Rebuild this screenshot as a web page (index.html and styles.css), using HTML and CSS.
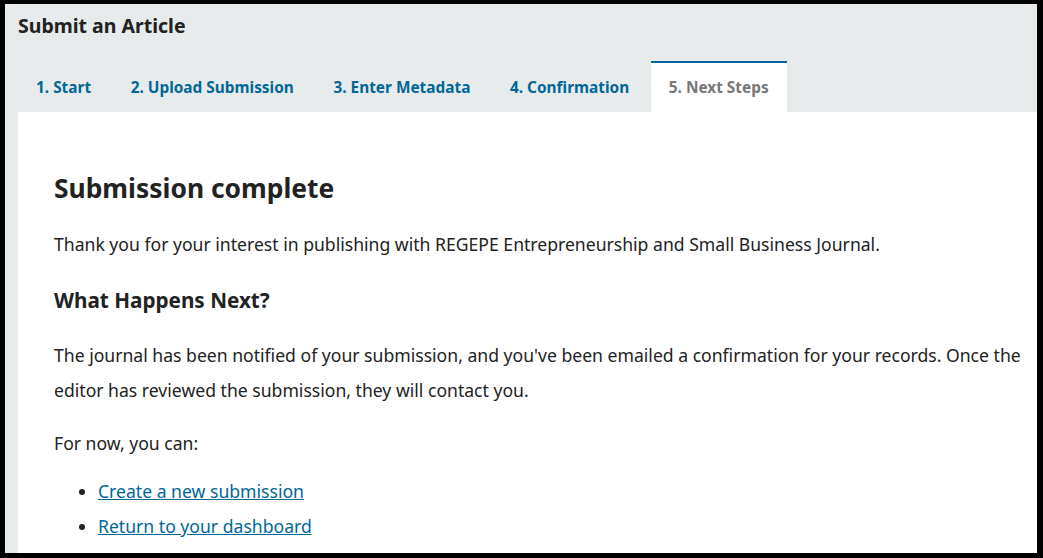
FILE: index.html
```html
<!DOCTYPE html>
<html lang="en">
<head>
  <meta charset="UTF-8">
  <title>Submit an Article</title>
  <link rel="stylesheet" href="styles.css">
</head>
<body>
  <div id="page">
    <h1 class="page-title">Submit an Article</h1>

    <ul class="tabs">
      <li><a href="#">1. Start</a></li>
      <li><a href="#">2. Upload Submission</a></li>
      <li><a href="#">3. Enter Metadata</a></li>
      <li><a href="#">4. Confirmation</a></li>
      <li class="active"><a href="#">5. Next Steps</a></li>
    </ul>

    <div class="panel">
      <h2>Submission complete</h2>
      <p>Thank you for your interest in publishing with REGEPE Entrepreneurship and Small Business Journal.</p>
      <h3>What Happens Next?</h3>
      <p>The journal has been notified of your submission, and you've been emailed a confirmation for your records. Once the editor has reviewed the submission, they will contact you.</p>
      <p class="tight">For now, you can:</p>
      <ul class="next-links">
        <li><a href="#">Create a new submission</a></li>
        <li><a href="#">Return to your dashboard</a></li>
      </ul>
    </div>
  </div>
</body>
</html>
```

FILE: styles.css
```css
html, body {
  margin: 0;
  padding: 0;
  height: 100%;
  background: #000;
  font-family: 'Noto Sans', 'Open Sans', sans-serif;
  color: #222;
  overflow: hidden;
}
body {
  padding: 4px 6px 5px 5px;
  box-sizing: border-box;
}
#page {
  height: 100%;
  background: #e8ebec;
  padding-left: 13px;
  box-sizing: border-box;
  overflow: hidden;
  display: flex;
  flex-direction: column;
}
.page-title {
  margin: 0;
  padding: 9px 0 0;
  font-size: 19.5px;
  line-height: 26px;
  font-weight: bold;
  color: #222;
}
.tabs {
  list-style: none;
  margin: 22px 0 0;
  padding: 0;
  display: flex;
  gap: 3.6px;
}
.tabs li {
  border-top: 2px solid transparent;
}
.tabs a {
  display: block;
  padding: 0 18px;
  line-height: 49px;
  font-size: 15.4px;
  font-weight: bold;
  color: #006798;
  text-decoration: none;
}
.tabs li.active {
  background: #fff;
  border-top-color: #006798;
}
.tabs li.active a {
  color: #777;
}
.panel {
  flex: 1;
  background: #fff;
  padding: 41px 10px 0 36px;
}
.panel h2 {
  margin: 17px 0 0;
  font-size: 26.4px;
  line-height: 36px;
  font-weight: bold;
}
.panel p {
  margin: 21px 0 0;
  font-size: 17.6px;
  line-height: 35px;
}
.panel p.tight {
  margin-top: 18px;
}
.panel h3 {
  margin: 21px 0 0;
  font-size: 20.7px;
  line-height: 34px;
  font-weight: bold;
}
.next-links {
  margin: 13px 0 0;
  padding-left: 44px;
  font-size: 17.6px;
  line-height: 35px;
}
.next-links a {
  color: #006798;
}
```
